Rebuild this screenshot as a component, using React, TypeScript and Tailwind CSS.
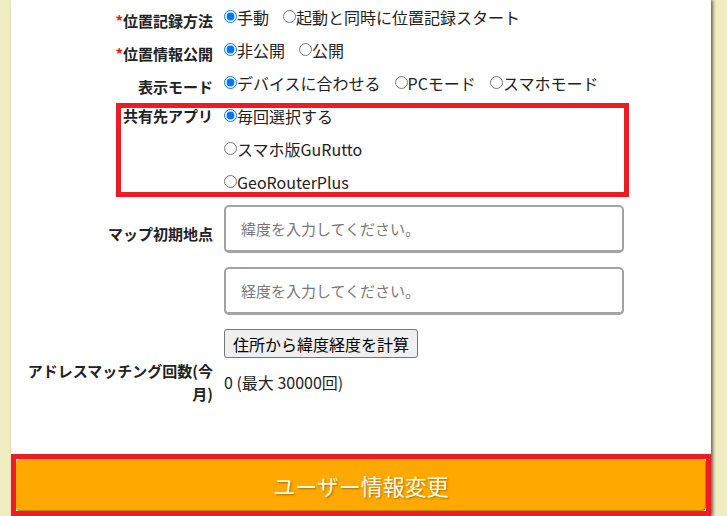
import type { ReactNode } from "react";

const Radio = ({ name, label, checked }: { name: string; label: string; checked?: boolean }) => (
  <label className="flex items-center whitespace-nowrap">
    <input type="radio" name={name} defaultChecked={checked} className="w-[13px] h-[13px]" />
    <span>{label}</span>
  </label>
);

const Row = ({
  label,
  required,
  low,
  children,
}: {
  label: string;
  required?: boolean;
  low?: boolean;
  children: ReactNode;
}) => (
  <div className="flex">
    <div
      className={`relative w-[202px] pl-[12px] text-right text-[15px] font-bold leading-[33px] text-[#222] ${low ? "top-[4px]" : ""}`}
    >
      {required && <span className="text-[#e02020]">*</span>}
      {label}
    </div>
    <div className="ml-[11px] flex-1">{children}</div>
  </div>
);

export default function App() {
  return (
    <div className="min-h-screen bg-[#efecc1] font-['Noto_Sans_CJK_JP',sans-serif] text-[#222]">
      <div className="ml-[11px] w-[700px] min-h-screen bg-white shadow-[2px_0_3px_rgba(60,60,50,0.75)]">
        {/* 基本設定 */}
        <Row label="位置記録方法" required low>
          <div className="flex h-[33px] items-center gap-[14px] text-[16px]">
            <Radio name="rec" label="手動" checked />
            <Radio name="rec" label="起動と同時に位置記録スタート" />
          </div>
        </Row>
        <Row label="位置情報公開" required low>
          <div className="flex h-[33px] items-center gap-[14px] text-[16px]">
            <Radio name="pub" label="非公開" checked />
            <Radio name="pub" label="公開" />
          </div>
        </Row>
        <Row label="表示モード" low>
          <div className="flex h-[33px] items-center gap-[14px] text-[16px]">
            <Radio name="mode" label="デバイスに合わせる" checked />
            <Radio name="mode" label="PCモード" />
            <Radio name="mode" label="スマホモード" />
          </div>
        </Row>

        {/* 共有先アプリ（赤枠） */}
        <div className="relative">
          <Row label="共有先アプリ">
            <div className="flex flex-col text-[16px]">
              <div className="flex h-[33px] items-center">
                <Radio name="app" label="毎回選択する" checked />
              </div>
              <div className="flex h-[33px] items-center">
                <Radio name="app" label="スマホ版GuRutto" />
              </div>
              <div className="flex h-[33px] items-center">
                <Radio name="app" label="GeoRouterPlus" />
              </div>
            </div>
          </Row>
          <div className="pointer-events-none absolute left-[105px] top-[4px] h-[94px] w-[513px] border-[5px] border-[#ed1c24]"></div>
        </div>

        {/* マップ初期地点 */}
        <div className="mt-[7px] flex">
          <div className="w-[202px] pl-[12px] pt-[17px] text-right text-[15px] font-bold leading-[23px]">
            マップ初期地点
          </div>
          <div className="ml-[11px] flex w-[400px] flex-col gap-[14px]">
            <input
              placeholder="緯度を入力してください。"
              className="h-[48px] w-full rounded-[5px] border-2 border-b-[3px] border-[#a3a3a3] px-[15px] text-[15px] placeholder:text-[#777] outline-none"
            />
            <input
              placeholder="経度を入力してください。"
              className="h-[48px] w-full rounded-[5px] border-2 border-b-[3px] border-[#a3a3a3] px-[15px] text-[15px] placeholder:text-[#777] outline-none"
            />
            <div>
              <button className="h-[29px] rounded-[3px] border border-[#767676] bg-[#efefef] px-[8px] text-[16px] leading-[20px] text-black">
                住所から緯度経度を計算
              </button>
            </div>
          </div>
        </div>

        {/* アドレスマッチング回数 */}
        <div className="mt-[1px] flex items-center">
          <div className="w-[202px] pl-[12px] text-right text-[15px] font-bold leading-[23px]">
            アドレスマッチング回数(今月)
          </div>
          <div className="ml-[11px] text-[16px]">0 (最大 30000回)</div>
        </div>

        {/* 送信ボタン（赤枠） */}
        <div className="mt-[49px] border-[5px] border-[#ed1c24]">
          <button className="flex h-[52px] w-full items-center justify-center rounded-[4px] bg-[#ffa800] text-[22px] text-[#fffbe8] [text-shadow:1px_1px_2px_rgba(0,0,0,0.35)] shadow-[inset_-1px_-1px_1px_rgba(0,0,0,0.25)]">
            ユーザー情報変更
          </button>
        </div>
      </div>
    </div>
  );
}
